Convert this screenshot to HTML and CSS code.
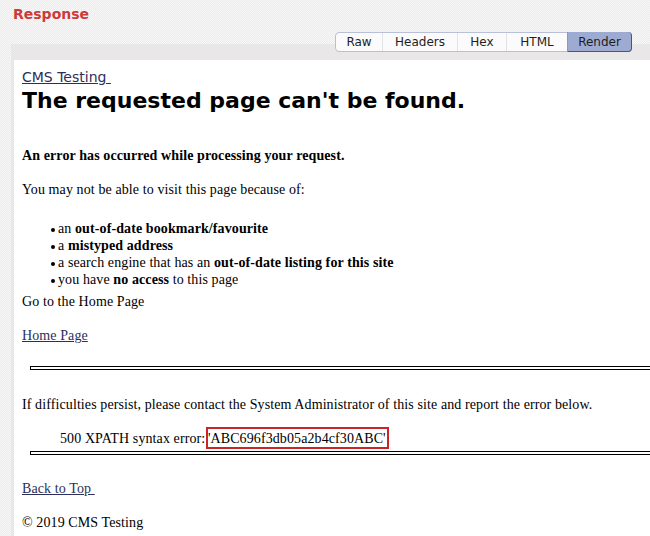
FILE: index.html
```html
<!DOCTYPE html>
<html>
<head>
<meta charset="utf-8">
<link rel="stylesheet" href="styles.css">
</head>
<body>
<div class="title">Response</div>
<div class="tabrow">
  <div class="tabs">
    <span class="tab">Raw</span>
    <span class="tab">Headers</span>
    <span class="tab">Hex</span>
    <span class="tab">HTML</span>
    <span class="tab active">Render</span>
  </div>
</div>
<div class="panel">
  <div class="content">
    <a class="site" href="#">CMS Testing&nbsp;</a>
    <h1 class="heading">The requested page can't be found.</h1>
    <p class="lead"><b>An error has occurred while processing your request.</b></p>
    <p class="intro">You may not be able to visit this page because of:</p>
    <ul class="reasons">
      <li>an <b>out-of-date bookmark/favourite</b></li>
      <li>a <b>mistyped address</b></li>
      <li>a search engine that has an <b>out-of-date listing for this site</b></li>
      <li>you have <b>no access</b> to this page</li>
    </ul>
    <p>Go to the Home Page</p>
    <p><a class="link" href="#">Home Page</a></p>
    <hr class="rule">
    <p class="persist">If difficulties persist, please contact the System Administrator of this site and report the error below.</p>
    <p class="error">500 XPATH syntax error: <span class="hl">'ABC696f3db05a2b4cf30ABC'</span></p>
    <hr class="rule rule2">
    <p class="back"><a class="link" href="#">Back to Top&nbsp;</a></p>
    <p>© 2019 CMS Testing</p>
  </div>
</div>
</body>
</html>
```

FILE: styles.css
```css
html, body {
  margin: 0;
  padding: 0;
  overflow: hidden;
}
body {
  width: 650px;
  height: 536px;
  background-color: #f2f2f2;
  background-image: conic-gradient(#ebebeb 25%, #f8f8f8 0 50%, #ebebeb 0 75%, #f8f8f8 0);
  background-size: 2px 2px;
  font-family: "Liberation Serif", serif;
}
.title {
  height: 26px;
  padding: 6px 0 0 13px;
  font-family: "DejaVu Sans", sans-serif;
  font-size: 14px;
  line-height: 17px;
  font-weight: bold;
  color: #cc3b3b;
}
.tabrow {
  position: relative;
  z-index: 1;
  display: flex;
  justify-content: flex-end;
  padding-right: 18px;
  margin-bottom: -8px;
}
.tabs {
  display: grid;
  grid-template-columns: 46px 75px 49px 61px 64px;
  height: 20px;
  box-sizing: border-box;
  background: #fbfbfb;
  border: 1px solid #b7bfdb;
  border-radius: 4px;
  font-family: "DejaVu Sans", sans-serif;
  font-size: 12px;
  color: #1e1e1e;
}
.tab {
  display: flex;
  align-items: center;
  justify-content: center;
  border-left: 1px solid #e2e2e6;
  line-height: 18px;
}
.tab:first-child {
  border-left: none;
}
.tab.active {
  background: #9dabd2;
  border-left: 1px solid #8b98bd;
  border-right: 1px solid #4e5570;
  border-bottom: 1px solid #4e5570;
  margin: -1px -1px -1px 0;
  border-radius: 0 4px 4px 0;
}
.panel {
  margin-left: 11px;
  background: #e9e7e8;
  padding: 16px 0 0 3px;
  height: 476px;
}
.content {
  background: #fff;
  height: 100%;
  padding: 9px 0 0 8px;
  box-sizing: border-box;
  font-size: 14px;
  line-height: 17px;
  letter-spacing: 0.1px;
  color: #000;
}
.site {
  display: block;
  font-family: "DejaVu Sans", sans-serif;
  font-size: 14px;
  line-height: 17px;
  letter-spacing: 0;
  color: #2c2f5c;
  text-decoration: underline;
}
.heading {
  margin: 1px 0 33px;
  font-family: "DejaVu Sans", sans-serif;
  font-size: 22px;
  line-height: 27px;
  letter-spacing: 0;
  font-weight: bold;
  color: #000;
}
p {
  margin: 0 0 17px;
}
.reasons {
  list-style: none;
  margin: 22px 0 5px;
  padding: 0 0 0 29px;
}
.reasons li::before {
  content: "";
  display: inline-block;
  width: 4px;
  height: 4px;
  border-radius: 50%;
  background: #000;
  margin-right: 3px;
  vertical-align: 1px;
}
.link {
  color: #2c2f5c;
  text-decoration: underline;
}
.rule {
  height: 2px;
  margin: 22px 0 26px 8px;
  border: 1px solid #000;
  border-right: none;
  background: #fff;
}
.error {
  padding-left: 38px;
  margin-bottom: 0;
}
.hl {
  border: 2px solid #cc2229;
  padding: 2px 1px 1px 0;
  margin-left: -3px;
}
.rule2 {
  margin-top: 4px;
  margin-bottom: 25px;
}
```
